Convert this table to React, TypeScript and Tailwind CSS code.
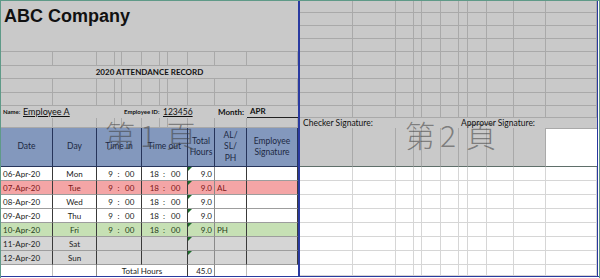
import React from "react";

type Day = {
  date: string;
  day: string;
  work: boolean;
  leave: string;
  bg: string;
  fg: string;
};

const days: Day[] = [
  { date: "06-Apr-20", day: "Mon", work: true, leave: "", bg: "bg-white", fg: "text-[#222]" },
  { date: "07-Apr-20", day: "Tue", work: true, leave: "AL", bg: "bg-[#f4a5a6]", fg: "text-[#7d1616]" },
  { date: "08-Apr-20", day: "Wed", work: true, leave: "", bg: "bg-white", fg: "text-[#222]" },
  { date: "09-Apr-20", day: "Thu", work: true, leave: "", bg: "bg-white", fg: "text-[#222]" },
  { date: "10-Apr-20", day: "Fri", work: true, leave: "PH", bg: "bg-[#c6e0b4]", fg: "text-[#26401a]" },
  { date: "11-Apr-20", day: "Sat", work: false, leave: "", bg: "bg-[#d5d5d5]", fg: "text-[#222]" },
  { date: "12-Apr-20", day: "Sun", work: false, leave: "", bg: "bg-[#d5d5d5]", fg: "text-[#222]" },
];

const grayCell = "border-r border-b border-[#a9a9a9]";

function blanks(n: number, key: string, cls: string) {
  return Array.from({ length: n }, (_, i) => <div key={key + i} className={cls} />);
}

// page number stamp of the page break preview
function Stamp({ n, left }: { n: string; left: string }) {
  return (
    <div
      className={`pointer-events-none absolute top-[118px] ${left} flex font-['Noto_Sans_CJK_TC',sans-serif] text-[30px] font-light leading-none text-[rgba(60,60,60,0.55)]`}
    >
      <span>第</span>
      <span className="ml-[5px]">{n}</span>
      <span className="ml-[10px]">頁</span>
    </div>
  );
}

function HeaderRow() {
  const h =
    "bg-[#8398bd] border-r border-b border-[#26345a] flex items-center justify-center text-center text-[8.5px] leading-[11.5px] text-[#1c2843]";
  return (
    <>
      <div className={h}>Date</div>
      <div className={h}>Day</div>
      <div className={`${h} col-span-3`}>Time in</div>
      <div className={`${h} col-span-3`}>Time out</div>
      <div className={h}>
        Total
        <br />
        Hours
      </div>
      <div className={h}>
        AL/
        <br />
        SL/
        <br />
        PH
      </div>
      <div className={h}>
        Employee
        <br />
        Signature
      </div>
    </>
  );
}

function DataRow({ r }: { r: Day }) {
  const c = `${r.bg} ${r.fg} border-b border-[#9d9d9d] flex items-center text-[8px] leading-none`;
  return (
    <>
      <div className={`${c} border-r border-r-[#3a3a3a] pl-[2px]`}>{r.date}</div>
      <div className={`${c} border-r border-r-[#3a3a3a] justify-center`}>{r.day}</div>
      <div className={`${c} justify-end pr-[2px]`}>{r.work ? "9" : ""}</div>
      <div className={`${c} justify-center`}>{r.work ? ":" : ""}</div>
      <div className={`${c} border-r border-r-[#3a3a3a] pl-[3px]`}>{r.work ? "00" : ""}</div>
      <div className={`${c} justify-end pr-[1px]`}>{r.work ? "18" : ""}</div>
      <div className={`${c} justify-center`}>{r.work ? ":" : ""}</div>
      <div className={`${c} border-r border-r-[#3a3a3a] pl-[3px]`}>{r.work ? "00" : ""}</div>
      <div className={`${c} relative border-r border-r-[#8a8a8a] justify-end pr-[2px]`}>
        <span className="absolute left-0 top-0 h-0 w-0 border-t-[4px] border-r-[4px] border-t-[#1d6b2a] border-r-transparent" />
        {r.work ? "9.0" : ""}
      </div>
      <div className={`${c} border-r border-r-[#3a3a3a] pl-[2px]`}>{r.leave}</div>
      <div className={`${c} border-r border-r-[#3a3a3a]`} />
    </>
  );
}

function LeftPage() {
  return (
    <div className="relative w-[297px] h-[275px] bg-[#c9c9c9] grid grid-cols-[52px_44px_18px_7px_20px_18px_8px_20px_27px_32px_51px] grid-rows-[12px_13px_13px_13px_14px_13px_14px_13px_12px_10px_39px_14px_14px_14px_14px_14px_14px_14px_11px]">
      <div className="col-span-11 row-span-4 border-b border-[#a9a9a9] pl-[3px] pt-[6px] font-['Liberation_Sans',Arial,sans-serif] text-[18px] font-bold leading-none text-[#111]">
        ABC Company
      </div>
      {blanks(11, "r5-", grayCell)}
      <div className="col-span-11 border-b border-[#a9a9a9] flex items-center justify-center text-[8px] font-bold text-[#111]">
        2020 ATTENDANCE RECORD
      </div>
      {blanks(22, "r7-", grayCell)}
      <div className="col-span-9 flex items-end pb-[1px] pl-[2px] text-[#111]">
        <span className="w-[20px] text-[6px] font-bold leading-[10px]">Name:</span>
        <span className="w-[101px] text-[9px] leading-[10px] underline decoration-[0.5px] underline-offset-[1px]">
          Employee A
        </span>
        <span className="w-[39px] text-[6px] font-bold leading-[10px]">Employee ID:</span>
        <span className="text-[8.5px] leading-[10px] underline decoration-[0.5px] underline-offset-[1px]">123456</span>
      </div>
      <div className="flex items-end pb-[1px] pl-[3px] text-[8px] font-bold leading-[10px] text-[#111]">Month:</div>
      <div className="flex items-end pb-[1px] pl-[3px] border-b border-[#222] text-[8px] font-bold leading-[10px] text-[#111]">
        APR
      </div>
      {blanks(11, "r10-", grayCell)}
      <HeaderRow />
      {days.map((r) => (
        <DataRow key={r.date} r={r} />
      ))}
      <div className="bg-white border-r border-[#bdbdbd]" />
      <div className="bg-white border-r border-[#8a8a8a]" />
      <div className="col-span-6 bg-white border-r border-[#3a3a3a] flex items-center justify-center text-[8px] leading-none text-[#222]">
        Total Hours
      </div>
      <div className="bg-white border-r border-[#8a8a8a] flex items-center justify-end pr-[2px] text-[8px] leading-none text-[#222]">
        45.0
      </div>
      <div className="bg-white border-r border-[#bdbdbd]" />
      <div className="bg-white" />
      <Stamp n="1" left="left-[104px]" />
    </div>
  );
}

function RightPage() {
  const white = "bg-white border-r border-b border-[#d6d6d6]";
  return (
    <div className="relative w-[297px] h-[275px] bg-[#c9c9c9] grid grid-cols-[53px_43px_18px_8px_19px_18px_9px_19px_27px_32px_51px] grid-rows-[12px_13px_13px_13px_14px_13px_14px_13px_12px_10px_39px_14px_14px_14px_14px_14px_14px_14px_11px]">
      {blanks(99, "g-", grayCell)}
      <div className="col-span-6 flex items-center pl-[3px] text-[8.5px] leading-none text-[#111]">
        Checker Signature:
      </div>
      <div className="col-span-4 flex items-center pl-[2px] text-[8.5px] leading-none text-[#111]">
        Approver Signature:
      </div>
      <div />
      {blanks(10, "s-", "border-r border-b border-r-[#a9a9a9] border-b-[#5f6f6a]")}
      <div className="bg-white border-t border-b border-t-[#a9a9a9] border-b-[#5f6f6a]" />
      {blanks(88, "w-", white)}
      <Stamp n="2" left="left-[105px]" />
    </div>
  );
}

export default function App() {
  return (
    <div className="w-[600px] h-[278px] overflow-hidden bg-white border-t border-l border-r border-[#5f9a88] font-['Lato',sans-serif]">
      <div className="flex h-[276px] border-b border-[#2a3aa0]">
        <LeftPage />
        <div className="w-[2px] bg-[#2a3aa0]" />
        <RightPage />
        <div className="w-px bg-[#2a3aa0]" />
      </div>
    </div>
  );
}
